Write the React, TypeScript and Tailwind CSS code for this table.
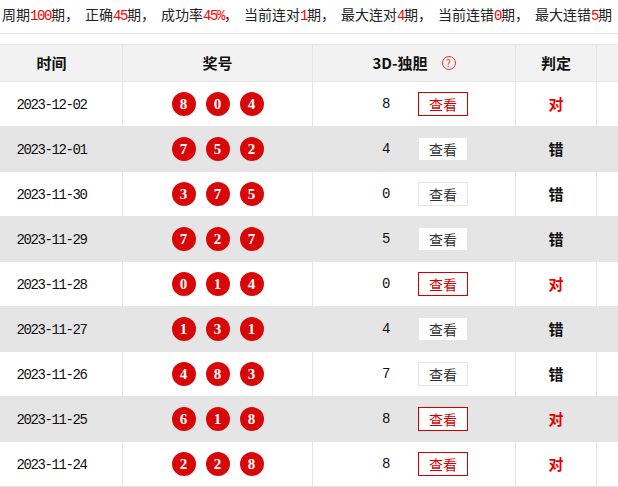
const stats: [string, string][] = [
  ['周期', '100'],
  ['正确', '45'],
  ['成功率', '45%'],
  ['当前连对', '1'],
  ['最大连对', '4'],
  ['当前连错', '0'],
  ['最大连错', '5'],
]

interface Row {
  date: string
  balls: number[]
  pick: number
  hit: boolean
}

const rows: Row[] = [
  { date: '2023-12-02', balls: [8, 0, 4], pick: 8, hit: true },
  { date: '2023-12-01', balls: [7, 5, 2], pick: 4, hit: false },
  { date: '2023-11-30', balls: [3, 7, 5], pick: 0, hit: false },
  { date: '2023-11-29', balls: [7, 2, 7], pick: 5, hit: false },
  { date: '2023-11-28', balls: [0, 1, 4], pick: 0, hit: true },
  { date: '2023-11-27', balls: [1, 3, 1], pick: 4, hit: false },
  { date: '2023-11-26', balls: [4, 8, 3], pick: 7, hit: false },
  { date: '2023-11-25', balls: [6, 1, 8], pick: 8, hit: true },
  { date: '2023-11-24', balls: [2, 2, 8], pick: 8, hit: true },
]

const mono = "font-['Liberation_Mono',monospace] tracking-[-1.4px]"

export default function App() {
  return (
    <div className="w-[618px] h-[487px] overflow-hidden bg-white text-[#222] font-['Noto_Sans_CJK_SC','Noto_Sans',sans-serif] text-[14px]">
      {/* Summary line */}
      <div className="h-[34px] border-b border-[#e5e5e5] flex items-start pl-[2px] whitespace-nowrap leading-[28px]">
        {stats.map(([label, value], i) => (
          <span key={i} className={i > 0 ? 'ml-[6px]' : ''}>
            {label}
            <span className={`${mono} text-[#f00]`}>{value}</span>
            {label === '成功率' ? '' : '期'}
            {i < stats.length - 1 ? '，' : ''}
          </span>
        ))}
      </div>

      {/* History table */}
      <div className="mt-[10px] ml-[-20px]">
        <table className="table-fixed border-collapse w-[716px]">
          <colgroup>
            <col className="w-[142px]" />
            <col className="w-[190px]" />
            <col className="w-[203px]" />
            <col className="w-[81px]" />
            <col className="w-[100px]" />
          </colgroup>
          <thead>
            <tr className="bg-[#f2f2f2] h-[37px]">
              <th className="border border-[#e5e5e5] font-bold text-[15px] text-[#111]">时间</th>
              <th className="border border-[#e5e5e5] font-bold text-[15px] text-[#111]">奖号</th>
              <th className="border border-[#e5e5e5] font-bold text-[15px] text-[#111]">
                <div className="flex items-center justify-center gap-[14px]">
                  <span>3D-独胆</span>
                  <span className="w-[14px] h-[14px] rounded-full border border-[#e33] text-[#e33] text-[10px] leading-[12px] font-normal flex items-center justify-center">
                    ?
                  </span>
                </div>
              </th>
              <th className="border border-[#e5e5e5] font-bold text-[15px] text-[#111]">判定</th>
              <th className="border border-[#e5e5e5]"></th>
            </tr>
          </thead>
          <tbody>
            {rows.map((r, i) => (
              <tr key={r.date} className={`h-[45px] ${i % 2 === 1 ? 'bg-[#e5e5e5]' : 'bg-white'}`}>
                <td className="border border-[#e5e5e5] text-center">
                  <span className={`${mono} text-[#111]`}>{r.date}</span>
                </td>
                <td className="border border-[#e5e5e5]">
                  <div className="flex justify-center gap-[10px]">
                    {r.balls.map((b, j) => (
                      <span
                        key={j}
                        className="w-[24px] h-[24px] rounded-full bg-[#d80808] text-white font-bold text-[15px] font-['Liberation_Serif',serif] flex items-center justify-center"
                      >
                        {b}
                      </span>
                    ))}
                  </div>
                </td>
                <td className="border border-[#e5e5e5]">
                  <div className="flex items-center justify-center pl-[22px] gap-[29px]">
                    <span className={`${mono} w-[7px] text-[#111]`}>{r.pick}</span>
                    <span
                      className={`w-[50px] h-[24px] flex items-center justify-center border bg-white text-[14px] ${
                        r.hit ? 'border-[#d40000] text-[#d40000]' : 'border-[#e5e5e5] text-[#333]'
                      }`}
                    >
                      查看
                    </span>
                  </div>
                </td>
                <td className="border border-[#e5e5e5] text-center">
                  <span className={`text-[15px] font-bold ${r.hit ? 'text-[#e60000]' : 'text-[#111]'}`}>
                    {r.hit ? '对' : '错'}
                  </span>
                </td>
                <td className="border border-[#e5e5e5]"></td>
              </tr>
            ))}
          </tbody>
        </table>
      </div>
    </div>
  )
}
